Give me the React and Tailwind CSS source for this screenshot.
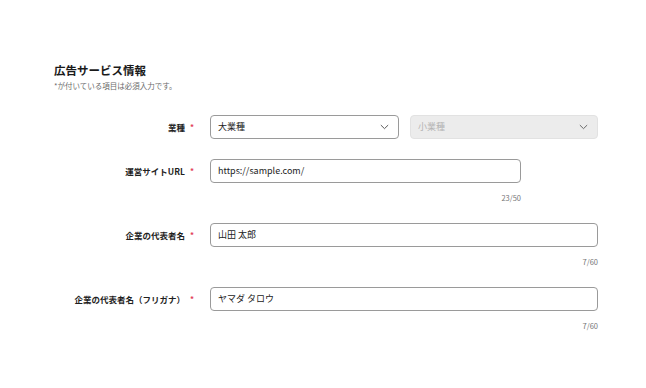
import React from 'react';

const font = { fontFamily: '"Noto Sans CJK JP", "Noto Sans", sans-serif' };

const Chevron = ({ className }) => (
    <svg viewBox="0 0 12 8" className={className} fill="none" stroke="currentColor" strokeWidth="1.3" strokeLinecap="round" strokeLinejoin="round">
        <path d="M1.5 1.8 6 6.2l4.5-4.4" />
    </svg>
);

const Label = ({ children }) => (
    <div className="w-[143px] shrink-0 h-6 flex items-center justify-end pr-[3px] text-[8.5px] font-bold text-[#1f1f1f] whitespace-nowrap">
        {children}
        <span className="ml-[5px] text-[#e23d5a] text-[8px]">*</span>
    </div>
);

const Counter = ({ children }) => (
    <div className="mt-[10px] h-[10px] leading-[10px] text-right text-[7.5px] text-[#777]">{children}</div>
);

const TextInput = ({ value, counter, width }) => (
    <div className={width}>
        <div className="h-6 border border-[#9a9a9a] rounded-[4px] bg-white flex items-center px-[7px] text-[9px] text-[#222]">
            {value}
        </div>
        <Counter>{counter}</Counter>
    </div>
);

export default function App() {
    return (
        <div className="w-[646px] h-[388px] bg-white pl-[54px] pt-[62px]" style={font}>
            <h2 className="text-[11.5px] font-bold text-[#1a1a1a] leading-[16px]">広告サービス情報</h2>
            <p className="mt-[3px] text-[7.5px] text-[#6b6b6b] leading-[10px]">*が付いている項目は必須入力です。</p>

            <div className="mt-[24px] flex flex-col gap-5">
                {/* 業種 */}
                <div className="flex items-start gap-[13px]">
                    <Label>業種</Label>
                    <div className="flex gap-[11px]">
                        <div className="w-[189px] h-6 border border-[#9a9a9a] rounded-[4px] bg-white flex items-center justify-between pl-[7px] pr-[9px] text-[9px] text-[#222]">
                            <span>大業種</span>
                            <Chevron className="w-[9px] h-[6px] text-[#555]" />
                        </div>
                        <div className="w-[188px] h-6 border border-[#e2e2e2] rounded-[4px] bg-[#ececec] flex items-center justify-between pl-[7px] pr-[9px] text-[9px] text-[#b4b4b4]">
                            <span>小業種</span>
                            <Chevron className="w-[9px] h-[6px] text-[#666]" />
                        </div>
                    </div>
                </div>

                {/* 運営サイトURL */}
                <div className="flex items-start gap-[13px]">
                    <Label>運営サイトURL</Label>
                    <TextInput width="w-[311px]" value="https://sample.com/" counter="23/50" />
                </div>

                {/* 企業の代表者名 */}
                <div className="flex items-start gap-[13px]">
                    <Label>企業の代表者名</Label>
                    <TextInput width="w-[388px]" value="山田 太郎" counter="7/60" />
                </div>

                {/* フリガナ */}
                <div className="flex items-start gap-[13px]">
                    <Label>企業の代表者名（フリガナ）</Label>
                    <TextInput width="w-[388px]" value="ヤマダ タロウ" counter="7/60" />
                </div>
            </div>
        </div>
    );
}
